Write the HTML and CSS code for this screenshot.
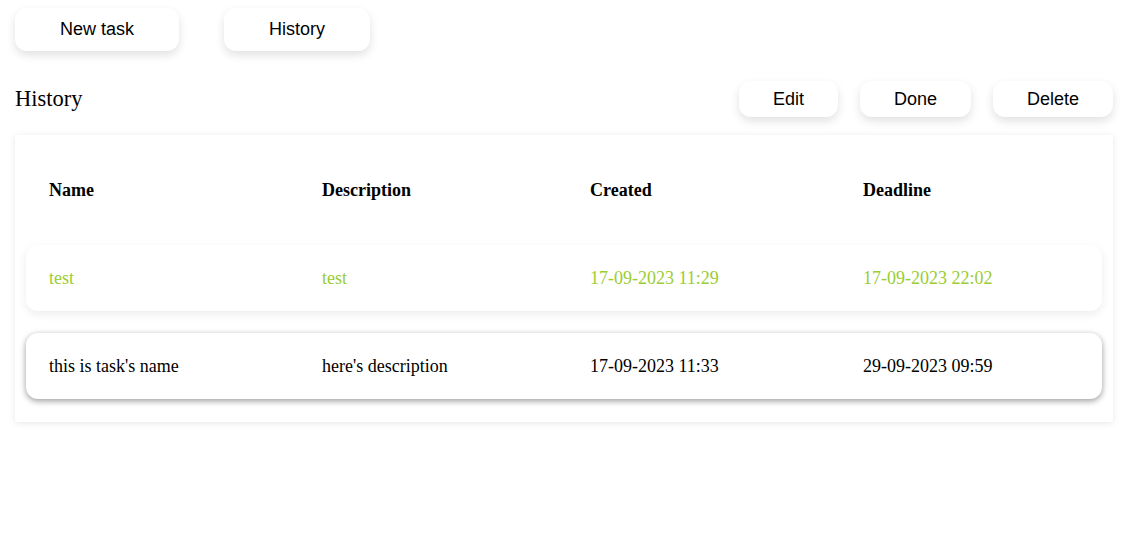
FILE: index.html
```html
<!DOCTYPE html>
<html>
<head>
<meta charset="utf-8">
<link rel="stylesheet" href="styles.css">
</head>
<body>
<nav class="topbar">
  <button class="btn btn-lg">New task</button>
  <button class="btn btn-lg">History</button>
</nav>
<div class="head">
  <h1 class="title">History</h1>
  <div class="actions">
    <button class="btn btn-sm">Edit</button>
    <button class="btn btn-sm">Done</button>
    <button class="btn btn-sm">Delete</button>
  </div>
</div>
<section class="card">
  <div class="row header">
    <div>Name</div><div>Description</div><div>Created</div><div>Deadline</div>
  </div>
  <div class="rows">
    <div class="row item done">
      <div>test</div><div>test</div><div>17-09-2023 11:29</div><div>17-09-2023 22:02</div>
    </div>
    <div class="row item selected">
      <div>this is task's name</div><div>here's description</div><div>17-09-2023 11:33</div><div>29-09-2023 09:59</div>
    </div>
  </div>
</section>
</body>
</html>
```
FILE: styles.css
```css
html, body { margin: 0; background: #fff; }
body {
  padding: 8px 18px 40px 15px;
  font-family: "Liberation Serif", "Times New Roman", serif;
  color: #000;
}
.btn {
  font-family: "Liberation Sans", Arial, sans-serif;
  font-size: 18px;
  color: #000;
  background: #fff;
  border: none;
  border-radius: 12px;
  box-shadow: 0 4px 10px rgba(0,0,0,0.12);
  cursor: pointer;
}
.topbar { display: flex; gap: 45px; }
.btn-lg { height: 43px; padding: 0 45px; }
.head {
  display: flex;
  justify-content: space-between;
  align-items: center;
  margin-top: 30px;
  height: 36px;
}
.title { margin: 0; font-weight: normal; font-size: 22.5px; }
.actions { display: flex; gap: 22px; }
.btn-sm { height: 36px; padding: 0 34px; }
.card {
  margin-top: 18px;
  padding: 11px 11px 23px;
  background: #fff;
  box-shadow: 0 1px 6px rgba(0,0,0,0.1);
}
.row {
  display: grid;
  grid-template-columns: 273px 268px 273px 1fr;
  align-items: center;
  padding: 0 23px;
  font-size: 18px;
}
.header { height: 88px; font-weight: bold; margin-bottom: 11px; padding-top: 0; }
.rows { display: flex; flex-direction: column; gap: 22px; }
.item { height: 66px; border-radius: 12px; background: #fff; }
.done { color: #9acd32; box-shadow: 0 3px 10px rgba(0,0,0,0.08); }
.selected { box-shadow: 0 2px 6px rgba(0,0,0,0.4); }
```
